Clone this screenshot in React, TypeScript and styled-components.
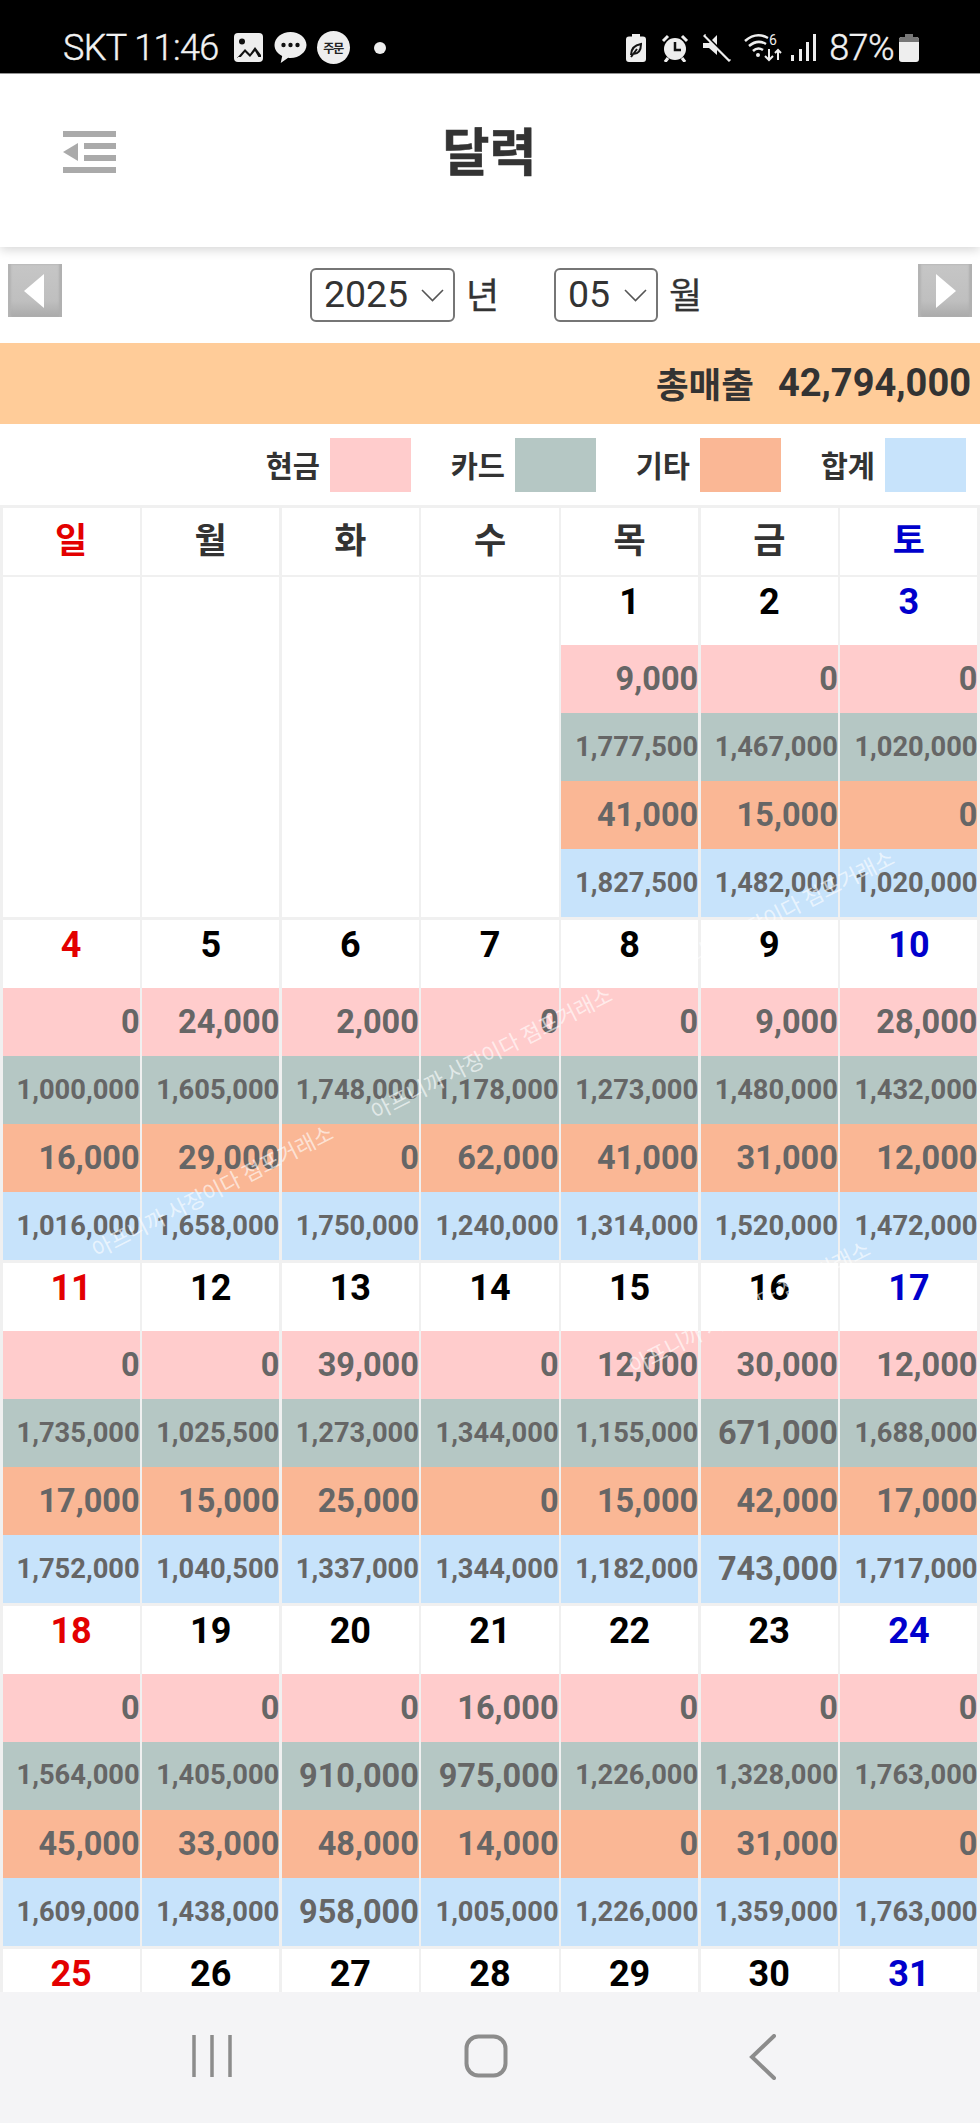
import React from "react";
import styled, { createGlobalStyle } from "styled-components";

const Global = createGlobalStyle`
  html, body { margin: 0; padding: 0; background: #fff; }
  * { box-sizing: border-box; }
  body { font-family: Roboto, "Noto Sans CJK KR", sans-serif; }
`;

const KR = `"Noto Sans CJK KR", Roboto, sans-serif`;

const Screen = styled.div`
  position: relative;
  width: 980px;
  height: 2123px;
  display: flex;
  flex-direction: column;
  overflow: hidden;
  background: #fff;
`;

const StatusBar = styled.div`
  height: 74px;
  flex: none;
  background: #000;
  border-bottom: 1px solid #999;
  color: #eee;
  display: flex;
  align-items: center;
  justify-content: space-between;
  padding: 22px 61px 0 63px;
`;
const StatusGroup = styled.div`
  display: flex;
  align-items: center;
`;
const StatusText = styled.span<{ $ml?: number }>`
  margin-left: ${(p) => p.$ml ?? 0}px;
  font: 300 36px/1 Roboto, sans-serif;
  letter-spacing: -0.6px;
  white-space: nowrap;
  color: #f2f2f2;
  -webkit-text-stroke: 0.4px #f2f2f2;
`;
const StatusIcon = styled.svg<{ $ml: number }>`
  display: block;
  flex: none;
  margin-left: ${(p) => p.$ml}px;
`;
const OrderBadge = styled.span`
  width: 33px;
  height: 33px;
  margin-left: 10px;
  flex: none;
  border-radius: 50%;
  background: #eee;
  color: #222;
  font: 700 12px/33px ${KR};
  text-align: center;
  letter-spacing: -1px;
`;
const Dot = styled.span`
  width: 12px;
  height: 12px;
  margin-left: 24px;
  border-radius: 50%;
  background: #eee;
`;

const Header = styled.header`
  position: relative;
  z-index: 2;
  height: 173px;
  flex: none;
  display: grid;
  grid-template-columns: 1fr auto 1fr;
  align-items: center;
  padding: 0 0 17px 63px;
  background: #fff;
  box-shadow: 0 3px 10px rgba(0, 0, 0, 0.16);
`;
const Title = styled.h1`
  margin: 0 0 6px;
  font: 700 51px/1 ${KR};
  color: #333;
  transform: translateX(-32px);
  -webkit-text-stroke: 0.6px #333;
`;

const Main = styled.main`
  flex: 1;
  min-height: 0;
  overflow: hidden;
`;

const Toolbar = styled.div`
  height: 96px;
  display: flex;
  align-items: flex-start;
  justify-content: space-between;
  padding: 17px 8px 0;
`;
const ArrowButton = styled.button`
  width: 54px;
  height: 53px;
  padding: 0;
  border: 0;
  display: flex;
  align-items: center;
  justify-content: center;
  background: linear-gradient(#c6c6c6, #bfbfbf 70%, #aaaaaa);
  box-shadow: inset 3px 0 2px #b4b4b4, inset -3px 0 2px #b0b0b0;
`;
const DatePicker = styled.div`
  margin-left: 32px;
  margin-top: 4px;
  display: flex;
  align-items: center;
`;
const SelectWrap = styled.div<{ $w: number }>`
  position: relative;
  width: ${(p) => p.$w}px;
  height: 54px;
`;
const Select = styled.select`
  appearance: none;
  width: 100%;
  height: 100%;
  margin: 0;
  padding: 0 0 2px 12px;
  border: 2px solid #767676;
  border-radius: 6px;
  background: #fff;
  color: #333;
  font: 400 37.5px Roboto, sans-serif;
`;
const SelectChevron = styled.svg`
  position: absolute;
  right: 11px;
  top: 21px;
  pointer-events: none;
`;
const DateUnit = styled.span<{ $mr: number }>`
  margin: 0 ${(p) => p.$mr}px 4px 11px;
  font: 400 36px/1 ${KR};
  color: #333;
  -webkit-text-stroke: 0.3px #333;
`;

const TotalBar = styled.div`
  height: 81px;
  display: flex;
  align-items: center;
  justify-content: flex-end;
  gap: 24px;
  padding: 0 9px 2px 0;
  background: #ffcc99;
  color: #333;
`;
const TotalLabel = styled.span`
  font: 700 35.5px/1 ${KR};
`;
const TotalValue = styled.span`
  font: 700 38px/1 Roboto, sans-serif;
`;

const Legend = styled.div`
  height: 81px;
  display: flex;
  align-items: center;
  justify-content: flex-end;
  gap: 33px;
  padding: 0 14px 0 0;
`;
const LegendItem = styled.div`
  width: 152px;
  display: flex;
  align-items: center;
  justify-content: flex-end;
  gap: 10px;
`;
const LegendLabel = styled.span`
  font: 700 29.5px/1 ${KR};
  color: #333;
  white-space: nowrap;
`;
const Swatch = styled.span<{ $c: string }>`
  width: 81px;
  height: 54px;
  flex: none;
  background: ${(p) => p.$c};
`;

const Calendar = styled.div`
  display: grid;
  grid-template-columns: repeat(7, 1fr);
  gap: 2.5px;
  padding: 2.5px 2.5px 0;
  background: #f0f0f0;
`;
const Weekday = styled.div<{ $c: string }>`
  height: 67px;
  display: flex;
  align-items: center;
  justify-content: center;
  background: #fff;
  color: ${(p) => p.$c};
  font: 700 35px/1 ${KR};
  padding-bottom: 7px;
`;
const DayCell = styled.div`
  display: flex;
  flex-direction: column;
  background: #fff;
`;
const DayNumber = styled.div<{ $c: string; $cut: boolean }>`
  height: ${(p) => (p.$cut ? 44 : 68.1)}px;
  flex: none;
  padding-top: 7px;
  text-align: center;
  color: ${(p) => p.$c};
  font: 700 36px/37px Roboto, sans-serif;
`;
const Amount = styled.div<{ $bg: string; $small: boolean }>`
  height: 68.1px;
  flex: none;
  display: flex;
  align-items: center;
  justify-content: flex-end;
  background: ${(p) => p.$bg};
  color: #666;
  font: 700 ${(p) => (p.$small ? 27.3 : 32.5)}px/1 Roboto, sans-serif;
`;

const Watermark = styled.span<{ $x: number; $y: number }>`
  position: absolute;
  z-index: 3;
  left: ${(p) => p.$x}px;
  top: ${(p) => p.$y}px;
  transform: translate(-50%, -50%) rotate(-26.8deg);
  font: 400 21.5px/1 ${KR};
  color: rgba(255, 255, 255, 0.62);
  white-space: nowrap;
  pointer-events: none;
`;

const NavBar = styled.nav`
  height: 131px;
  flex: none;
  position: relative;
  z-index: 2;
  display: flex;
  align-items: flex-start;
  padding: 42px 0 0 192px;
  background: #f4f4f6;
`;
const NavIcon = styled.svg<{ $ml: number }>`
  display: block;
  margin-left: ${(p) => p.$ml}px;
`;
const MenuIcon = styled.svg`
  display: block;
`;

const CASH = "#ffcccc";
const CARD = "#b5c7c4";
const ETC = "#fab795";
const SUM = "#c7e3fb";
const RED = "#e30000";
const BLUE = "#0000cc";

const legend: [string, string][] = [
  ["현금", CASH],
  ["카드", CARD],
  ["기타", ETC],
  ["합계", SUM],
];
const weekdays = ["일", "월", "화", "수", "목", "금", "토"];

const days: Record<number, string[]> = {
  1: ["9,000", "1,777,500", "41,000", "1,827,500"],
  2: ["0", "1,467,000", "15,000", "1,482,000"],
  3: ["0", "1,020,000", "0", "1,020,000"],
  4: ["0", "1,000,000", "16,000", "1,016,000"],
  5: ["24,000", "1,605,000", "29,000", "1,658,000"],
  6: ["2,000", "1,748,000", "0", "1,750,000"],
  7: ["0", "1,178,000", "62,000", "1,240,000"],
  8: ["0", "1,273,000", "41,000", "1,314,000"],
  9: ["9,000", "1,480,000", "31,000", "1,520,000"],
  10: ["28,000", "1,432,000", "12,000", "1,472,000"],
  11: ["0", "1,735,000", "17,000", "1,752,000"],
  12: ["0", "1,025,500", "15,000", "1,040,500"],
  13: ["39,000", "1,273,000", "25,000", "1,337,000"],
  14: ["0", "1,344,000", "0", "1,344,000"],
  15: ["12,000", "1,155,000", "15,000", "1,182,000"],
  16: ["30,000", "671,000", "42,000", "743,000"],
  17: ["12,000", "1,688,000", "17,000", "1,717,000"],
  18: ["0", "1,564,000", "45,000", "1,609,000"],
  19: ["0", "1,405,000", "33,000", "1,438,000"],
  20: ["0", "910,000", "48,000", "958,000"],
  21: ["16,000", "975,000", "14,000", "1,005,000"],
  22: ["0", "1,226,000", "0", "1,226,000"],
  23: ["0", "1,328,000", "31,000", "1,359,000"],
  24: ["0", "1,763,000", "0", "1,763,000"],
};
const rowColors = [CASH, CARD, ETC, SUM];
const watermarks: [number, number][] = [
  [491, 1052],
  [212, 1190],
  [773, 915],
  [749, 1306],
];

const dayColor = (i: number) => (i % 7 === 0 ? RED : i % 7 === 6 ? BLUE : "#000");

export default function App() {
  const cells = Array.from({ length: 35 }, (_, i) => i - 3);
  return (
    <Screen>
      <Global />
      <StatusBar>
        <StatusGroup>
          <StatusText>SKT 11:46</StatusText>
          <StatusIcon $ml={15} width="29" height="29" viewBox="0 0 29 29">
            <rect width="29" height="29" rx="4" fill="#eee" />
            <circle cx="8" cy="8.5" r="3" fill="#111" />
            <path d="M3 25l8-9 5 5 5-7 6 8v2H3z" fill="#111" />
            <path d="M6 25l5-6 5 5 5-6 4 7z" fill="#eee" />
          </StatusIcon>
          <StatusIcon $ml={11} width="33" height="33" viewBox="0 0 33 33">
            <path d="M16.5 1C7.7 1 .5 6.9.5 14c0 4.7 3.1 8.800 7.700 11l-1.500 7 7.500-5.300c.8.100 1.500.200 2.300.200 8.800 0 16-5.800 16-12.900S25.300 1 16.500 1z" fill="#eee" />
            <circle cx="9.500" cy="14" r="2.200" fill="#111" />
            <circle cx="16.500" cy="14" r="2.200" fill="#111" />
            <circle cx="23.500" cy="14" r="2.200" fill="#111" />
          </StatusIcon>
          <OrderBadge>주문</OrderBadge>
          <Dot />
        </StatusGroup>
        <StatusGroup>
          <StatusIcon $ml={0} width="20" height="28" viewBox="0 0 20 28">
            <path d="M6 0h8v2.500h3a3 3 0 0 1 3 3V25a3 3 0 0 1-3 3H3a3 3 0 0 1-3-3V5.500a3 3 0 0 1 3-3h3z" fill="#eee" />
            <path d="M5 21c0-7 4-10 10-11 0 6-2 10-8 10M5 23l6-8" stroke="#111" strokeWidth="2" fill="none" />
          </StatusIcon>
          <StatusIcon $ml={15} width="28" height="28" viewBox="0 0 28 28">
            <circle cx="14" cy="15" r="11" fill="#eee" />
            <path d="M14 8v8h6" stroke="#111" strokeWidth="2.500" fill="none" />
            <path d="M2 7l5-5M26 7l-5-5M7 24l-3 4M21 24l3 4" stroke="#eee" strokeWidth="3" />
          </StatusIcon>
          <StatusIcon $ml={14} width="28" height="28" viewBox="0 0 28 28">
            <path d="M0 9h6l8-8v20l-8-7H0z" fill="#eee" />
            <path d="M1 1l26 26" stroke="#eee" strokeWidth="3" />
            <path d="M3 1l24 24" stroke="#000" strokeWidth="1.500" />
          </StatusIcon>
          <StatusIcon $ml={13} width="38" height="29" viewBox="0 0 38 29">
            <path d="M1 8c8-7 16-7 23-3M5 13c6-5 12-5 17-2M9 18c3-3 7-3 10-1" stroke="#eee" strokeWidth="2.500" fill="none" />
            <circle cx="14" cy="22" r="2" fill="#eee" />
            <text x="25" y="12" fill="#eee" fontFamily="Roboto, sans-serif" fontSize="14">6</text>
            <path d="M25 16v11M21 23l4 4 4-4M34 27V17M31 20l3-3 3 3" stroke="#eee" strokeWidth="2" fill="none" />
          </StatusIcon>
          <StatusIcon $ml={9} width="25" height="27" viewBox="0 0 25 27">
            <rect x="0" y="21" width="3" height="6" fill="#eee" />
            <rect x="8" y="15" width="3" height="12" fill="#eee" />
            <rect x="15" y="8" width="3" height="19" fill="#eee" />
            <rect x="22" y="0" width="3" height="27" fill="#eee" />
          </StatusIcon>
          <StatusText $ml={13}>87%</StatusText>
          <StatusIcon $ml={5} width="20" height="28" viewBox="0 0 20 28">
            <path d="M6 0h8v3h3a3 3 0 0 1 3 3v19a3 3 0 0 1-3 3H3a3 3 0 0 1-3-3V6a3 3 0 0 1 3-3h3z" fill="#eee" />
            <path d="M6 0h8v3h3a3 3 0 0 1 3 3v2H0V6a3 3 0 0 1 3-3h3z" fill="#777" />
          </StatusIcon>
        </StatusGroup>
      </StatusBar>

      <Header>
        <MenuIcon width="53" height="42" viewBox="0 0 53 42">
          <g fill="#aaa">
            <rect x="0" y="0" width="53" height="6" />
            <rect x="21" y="12" width="32" height="6" />
            <rect x="21" y="24" width="32" height="6" />
            <rect x="0" y="36" width="53" height="6" />
            <path d="M15 12v18L0 21z" />
          </g>
        </MenuIcon>
        <Title>달력</Title>
        <span />
      </Header>

      <Main>
        <Toolbar>
          <ArrowButton aria-label="이전">
            <svg width="22" height="34" viewBox="0 0 22 34">
              <path d="M20 0v34L0 17z" fill="#fff" />
            </svg>
          </ArrowButton>
          <DatePicker>
            <SelectWrap $w={145}>
              <Select defaultValue="2025">
                <option>2025</option>
              </Select>
              <SelectChevron width="23" height="13" viewBox="0 0 23 13">
                <path d="M1 1l10.500 10.500L22 1" stroke="#555" strokeWidth="1.600" fill="none" />
              </SelectChevron>
            </SelectWrap>
            <DateUnit $mr={55}>년</DateUnit>
            <SelectWrap $w={104}>
              <Select defaultValue="05">
                <option>05</option>
              </Select>
              <SelectChevron width="23" height="13" viewBox="0 0 23 13">
                <path d="M1 1l10.500 10.500L22 1" stroke="#555" strokeWidth="1.600" fill="none" />
              </SelectChevron>
            </SelectWrap>
            <DateUnit $mr={0}>월</DateUnit>
          </DatePicker>
          <ArrowButton aria-label="다음">
            <svg width="22" height="34" viewBox="0 0 22 34">
              <path d="M2 0v34l20-17z" fill="#fff" />
            </svg>
          </ArrowButton>
        </Toolbar>

        <TotalBar>
          <TotalLabel>총매출</TotalLabel>
          <TotalValue>42,794,000</TotalValue>
        </TotalBar>

        <Legend>
          {legend.map(([label, color]) => (
            <LegendItem key={label}>
              <LegendLabel>{label}</LegendLabel>
              <Swatch $c={color} />
            </LegendItem>
          ))}
        </Legend>

        <Calendar>
          {weekdays.map((d, i) => (
            <Weekday key={d} $c={i === 0 ? RED : i === 6 ? BLUE : "#333"}>
              {d}
            </Weekday>
          ))}
          {cells.map((n, i) => (
            <DayCell key={i}>
              {n > 0 && (
                <DayNumber $c={dayColor(i)} $cut={n >= 25}>
                  {n}
                </DayNumber>
              )}
              {(days[n] ?? []).map((v, r) => (
                <Amount key={r} $bg={rowColors[r]} $small={v.length > 7}>
                  {v}
                </Amount>
              ))}
            </DayCell>
          ))}
        </Calendar>
      </Main>

      {watermarks.map(([x, y]) => (
        <Watermark key={`${x}-${y}`} $x={x} $y={y}>
          아프니까 사장이다 점포거래소
        </Watermark>
      ))}

      <NavBar>
        <NavIcon $ml={0} width="40" height="44" viewBox="0 0 40 44">
          <path d="M2 1v42M20 1v42M38 1v42" stroke="#8c8c8c" strokeWidth="3.500" />
        </NavIcon>
        <NavIcon $ml={232} width="44" height="44" viewBox="0 0 44 44">
          <rect x="2.500" y="2.500" width="39" height="39" rx="12" stroke="#8c8c8c" strokeWidth="4" fill="none" />
        </NavIcon>
        <NavIcon $ml={241} width="28" height="46" viewBox="0 0 28 46">
          <path d="M25 2L3 23l22 21" stroke="#8c8c8c" strokeWidth="4" fill="none" strokeLinecap="round" />
        </NavIcon>
      </NavBar>
    </Screen>
  );
}
